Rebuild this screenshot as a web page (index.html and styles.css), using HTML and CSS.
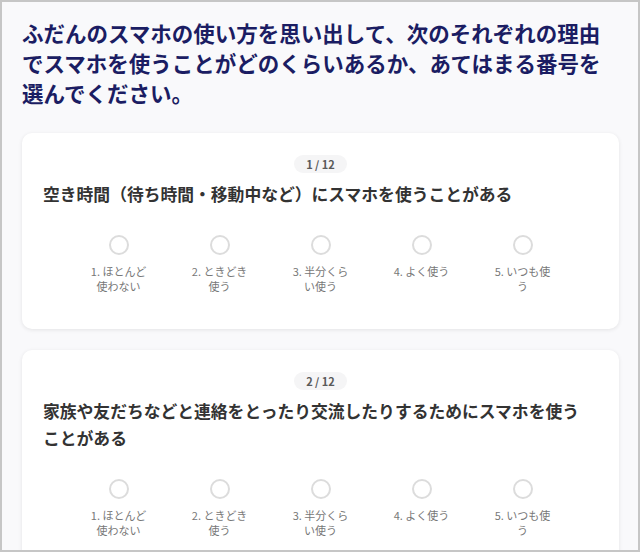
FILE: index.html
```html
<!DOCTYPE html>
<html lang="ja">
<head>
<meta charset="UTF-8" />
<meta name="viewport" content="width=device-width, initial-scale=1.0" />
<title>スマホの使い方アンケート</title>
<link rel="stylesheet" href="styles.css">
</head>
<body>

<div class="page">
  <h1 class="lead">ふだんのスマホの使い方を思い出して、次のそれぞれの理由でスマホを使うことがどのくらいあるか、あてはまる番号を選んでください。</h1>

  <div class="card">
    <div class="count">1 / 12</div>
    <p class="question">空き時間（待ち時間・移動中など）にスマホを使うことがある</p>
    <div class="scale">
      <label class="option"><input type="radio" name="q1" value="1"><span>1. ほとんど使わない</span></label>
      <label class="option"><input type="radio" name="q1" value="2"><span>2. ときどき使う</span></label>
      <label class="option"><input type="radio" name="q1" value="3"><span>3. 半分くらい使う</span></label>
      <label class="option"><input type="radio" name="q1" value="4"><span>4. よく使う</span></label>
      <label class="option"><input type="radio" name="q1" value="5"><span>5. いつも使う</span></label>
    </div>
  </div>

  <div class="card">
    <div class="count">2 / 12</div>
    <p class="question">家族や友だちなどと連絡をとったり交流したりするためにスマホを使うことがある</p>
    <div class="scale">
      <label class="option"><input type="radio" name="q2" value="1"><span>1. ほとんど使わない</span></label>
      <label class="option"><input type="radio" name="q2" value="2"><span>2. ときどき使う</span></label>
      <label class="option"><input type="radio" name="q2" value="3"><span>3. 半分くらい使う</span></label>
      <label class="option"><input type="radio" name="q2" value="4"><span>4. よく使う</span></label>
      <label class="option"><input type="radio" name="q2" value="5"><span>5. いつも使う</span></label>
    </div>
  </div>
</div>

</body>
</html>
```

FILE: styles.css
```css
html, body {
  margin: 0;
  padding: 0;
}
body {
  font-family: "Noto Sans CJK JP", "Noto Sans", sans-serif;
  background: #fff;
}
.page {
  box-sizing: border-box;
  width: 640px;
  height: 552px;
  overflow: hidden;
  border: 2px solid #c6c6c6;
  background: #f9f9fb;
  padding: 16px 19px 0 20px;
}
.lead {
  width: 597px;
  margin: 0 0 25px;
  font-size: 21.5px;
  line-height: 30px;
  font-weight: bold;
  color: #1b1d63;
}
.card {
  background: #fff;
  border-radius: 10px;
  box-shadow: 0 1px 4px rgba(0, 0, 0, 0.09);
  padding: 22px 21px 35px;
  margin-bottom: 21px;
}
.count {
  width: fit-content;
  margin: 0 auto 8px;
  padding: 0 12px;
  height: 18px;
  line-height: 18px;
  border-radius: 9px;
  background: #f5f5f6;
  color: #5a5a5a;
  font-size: 11px;
  font-weight: bold;
}
.question {
  max-width: 548px;
  margin: 0 0 27px;
  font-size: 16.8px;
  line-height: 27px;
  font-weight: bold;
  color: #333;
}
.scale {
  display: grid;
  grid-template-columns: repeat(5, 61px);
  column-gap: 40px;
  justify-content: center;
}
.option {
  display: flex;
  flex-direction: column;
  align-items: center;
  text-align: center;
  font-size: 11px;
  line-height: 15px;
  color: #777;
  cursor: pointer;
}
.option input {
  appearance: none;
  box-sizing: border-box;
  width: 20px;
  height: 20px;
  margin: 0 0 9px;
  border: 2px solid #dcdcdc;
  border-radius: 50%;
  background: #fff;
  cursor: pointer;
}
.option input:checked {
  border: 6px solid #1b1d63;
}
```
